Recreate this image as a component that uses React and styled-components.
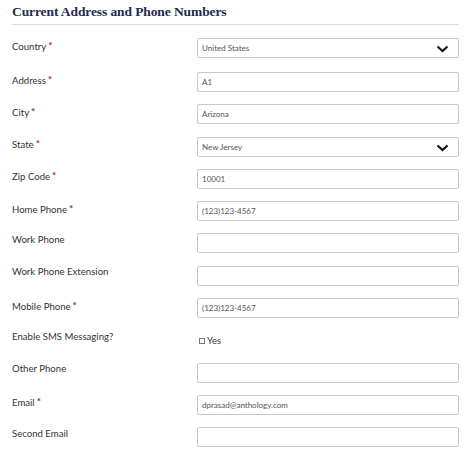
import React from "react";
import styled, { createGlobalStyle } from "styled-components";

const GlobalStyle = createGlobalStyle`
  body {
    margin: 0;
    background: #fff;
    font-family: Lato, "Liberation Sans", sans-serif;
  }
`;

const Section = styled.section`
  width: 447px;
  padding-left: 12px;
`;

const Heading = styled.h2`
  margin: 0;
  padding-top: 4px;
  height: 20px;
  border-bottom: 1px solid #dcdcdc;
  font-family: "Liberation Serif", serif;
  font-weight: bold;
  font-size: 13.5px;
  line-height: 16px;
  color: #1d2b4f;
  letter-spacing: -0.1px;
`;

const Rows = styled.div`
  padding-top: 13px;
`;

const Row = styled.div`
  display: grid;
  grid-template-columns: 185px 262px;
  align-items: start;
  height: ${({ $first }) => ($first ? "34px" : "32.3px")};
`;

const Label = styled.label`
  padding-top: 0.5px;
  font-size: 9.6px;
  line-height: 12px;
  color: #333;
`;

const Required = styled.span`
  color: #a82a2a;
  font-weight: bold;
  font-size: 10px;
  margin-left: 2px;
  vertical-align: 1px;
`;

const Field = styled.div`
  position: relative;
  box-sizing: border-box;
  height: 20px;
  border: 1px solid #c8c8c8;
  border-radius: 2px;
  display: flex;
  align-items: center;
  padding-left: 4px;
  font-size: 8px;
  color: #555;
  background: #fff;
`;

const Chevron = styled.svg`
  position: absolute;
  right: 9px;
  top: 6px;
`;

const CheckRow = styled.div`
  display: flex;
  align-items: center;
  gap: 2px;
  padding-top: 5px;
  padding-left: 2px;
  font-size: 9.5px;
  color: #333;
`;

const Box = styled.span`
  box-sizing: border-box;
  width: 6px;
  height: 6px;
  border: 1px solid #777;
`;

const fields = [
  { label: "Country", req: true, value: "United States", select: true },
  { label: "Address", req: true, value: "A1" },
  { label: "City", req: true, value: "Arizona" },
  { label: "State", req: true, value: "New Jersey", select: true },
  { label: "Zip Code", req: true, value: "10001" },
  { label: "Home Phone", req: true, value: "(123)123-4567" },
  { label: "Work Phone" },
  { label: "Work Phone Extension" },
  { label: "Mobile Phone", req: true, value: "(123)123-4567" },
  { label: "Enable SMS Messaging?", check: true },
  { label: "Other Phone" },
  { label: "Email", req: true, value: "dprasad@anthology.com" },
  { label: "Second Email" },
];

export default function App() {
  return (
    <>
      <GlobalStyle />
      <Section>
        <Heading>Current Address and Phone Numbers</Heading>
        <Rows>
          {fields.map((f, i) => (
            <Row key={f.label} $first={i === 0}>
              <Label>
                {f.label}
                {f.req && <Required>*</Required>}
              </Label>
              {f.check ? (
                <CheckRow>
                  <Box />
                  Yes
                </CheckRow>
              ) : (
                <Field>
                  {f.value}
                  {f.select && (
                    <Chevron width="13" height="8" viewBox="0 0 13 8">
                      <path d="M1.5 1.5l5 4.5 5-4.5" fill="none" stroke="#111" strokeWidth="2.2" />
                    </Chevron>
                  )}
                </Field>
              )}
            </Row>
          ))}
        </Rows>
      </Section>
    </>
  );
}
